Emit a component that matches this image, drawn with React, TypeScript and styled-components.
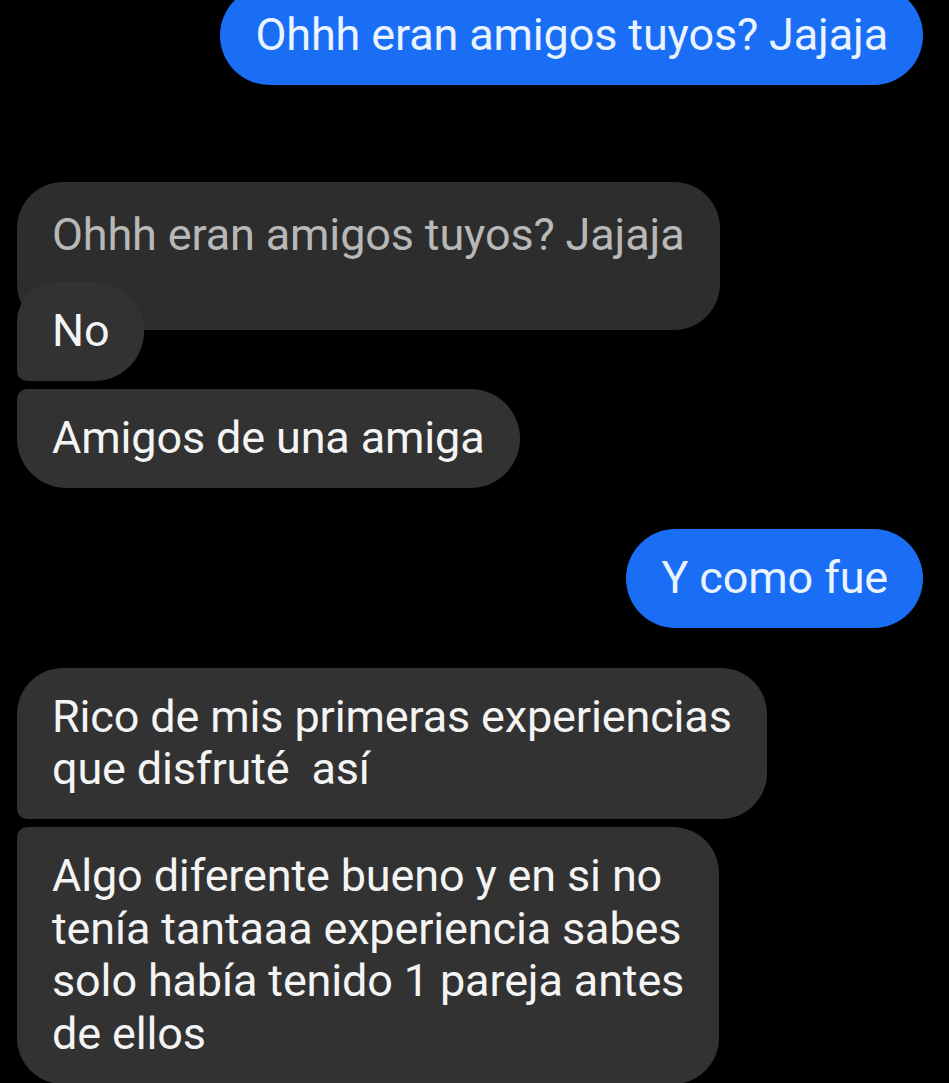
import styled, { createGlobalStyle } from 'styled-components';

const GlobalStyle = createGlobalStyle`
  html, body {
    margin: 0;
    padding: 0;
    background: #000;
  }
  body {
    font-family: Roboto, "Noto Sans", "Liberation Sans", sans-serif;
    overflow: hidden;
  }
`;

const Screen = styled.div`
  width: 949px;
  height: 1083px;
  background: #000;
  overflow: hidden;
`;

const Thread = styled.div`
  display: flex;
  flex-direction: column;
  padding: 0 26px 0 17px;
  margin-top: -14px;
`;

const Row = styled.div<{ $mine?: boolean; $gap?: number }>`
  display: flex;
  justify-content: ${(p) => (p.$mine ? 'flex-end' : 'flex-start')};
  margin-top: ${(p) => p.$gap ?? 0}px;
  position: relative;
`;

// corners: tl tr br bl
const Bubble = styled.div<{ $mine?: boolean; $corners?: string }>`
  box-sizing: border-box;
  background: ${(p) => (p.$mine ? '#1a6ef5' : '#323232')};
  color: ${(p) => (p.$mine ? '#eaf4ff' : '#f4f4f4')};
  font-size: 45px;
  line-height: 52.7px;
  letter-spacing: -0.15px;
  padding: 23px 35px 23px 35px;
  border-radius: ${(p) => p.$corners ?? '50px'};
  white-space: pre-wrap;
`;

const Quoted = styled(Bubble)`
  background: #2d2d2d;
  color: #b8b8b8;
  padding: 27px 35px 69px 35px;
  border-radius: 46px;
`;

const Overlap = styled(Row)`
  margin-top: -48px;
  z-index: 1;
`;

export default function App() {
  return (
    <Screen>
      <GlobalStyle />
      <Thread>
        <Row $mine>
          <Bubble $mine>Ohhh eran amigos tuyos? Jajaja</Bubble>
        </Row>

        <Row $gap={97}>
          <Quoted>Ohhh eran amigos tuyos? Jajaja</Quoted>
        </Row>
        <Overlap>
          <Bubble $corners="40px 50px 50px 10px">No</Bubble>
        </Overlap>
        <Row $gap={8}>
          <Bubble $corners="10px 50px 50px 50px">Amigos de una amiga</Bubble>
        </Row>

        <Row $mine $gap={41}>
          <Bubble $mine>Y como fue</Bubble>
        </Row>

        <Row $gap={40}>
          <Bubble $corners="46px 46px 46px 10px">
            {'Rico de mis primeras experiencias\nque disfruté  así'}
          </Bubble>
        </Row>
        <Row $gap={8}>
          <Bubble $corners="10px 46px 46px 46px">
            {'Algo diferente bueno y en si no\ntenía tantaaa experiencia sabes\nsolo había tenido 1 pareja antes\nde ellos'}
          </Bubble>
        </Row>
      </Thread>
    </Screen>
  );
}
